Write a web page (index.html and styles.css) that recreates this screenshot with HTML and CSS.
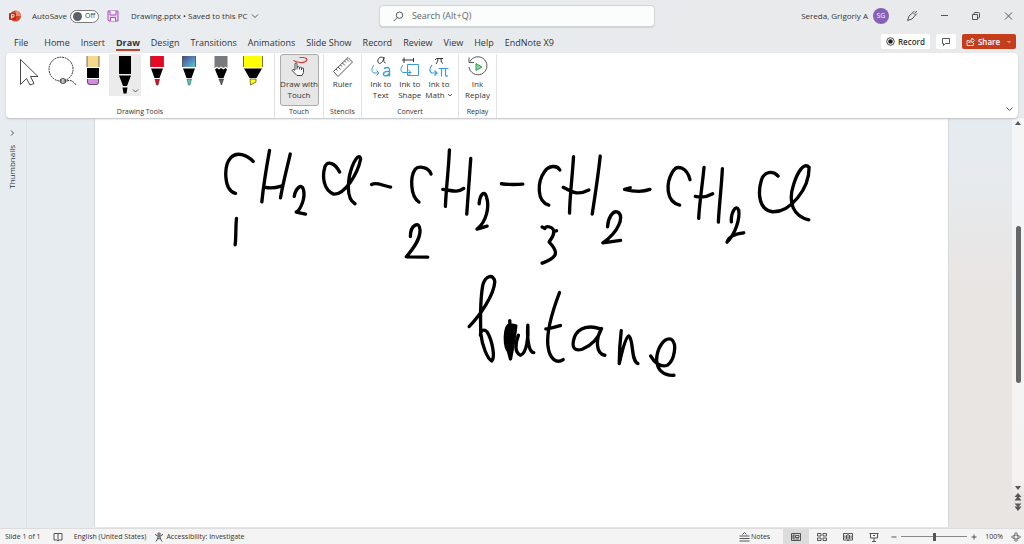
FILE: index.html
```
<!DOCTYPE html>
<html lang="en">
<head>
<meta charset="utf-8">
<title>Drawing.pptx - PowerPoint</title>
<link rel="stylesheet" href="styles.css">
</head>
<body>
<header class="titlebar">
  <div class="title-left">
    <svg class="logo" width="12" height="12" viewBox="0 0 12 12"><circle cx="6.500" cy="6" r="5.500" fill="#d9472b"/><path d="M6.500 .5a5.500 5.500 0 0 1 5.500 5.500H6.500z" fill="#f08a6c"/><rect y="3" width="7" height="7" rx="1" fill="#b92b12"/><path d="M2.500 8.500V4.500h1.500a1.200 1.200 0 0 1 0 2.500H2.500" fill="none" stroke="#fff"/></svg>
    <label class="autosave"><span>AutoSave</span><span class="switch"><input type="checkbox" role="switch"><span class="off">Off</span></span></label>
    <button class="plain save" aria-label="Save"><svg width="12" height="12" viewBox="0 0 12 12" fill="#ecd3f3" stroke="#a94fc0"><path d="M1 1h10v10H2L1 10z"/><path d="M3 1v4h6V1M3.500 11V7.500h5V11" fill="#f8f0fa"/></svg></button>
    <button class="plain doc">Drawing.pptx • Saved to this PC <svg width="8" height="8" viewBox="0 0 8 8"><path class="ln" d="M1 2.500l3 3 3-3"/></svg></button>
  </div>
  <div class="search">
    <svg width="11" height="11" viewBox="0 0 11 11"><circle class="ln" cx="6.500" cy="4.200" r="3.200"/><path class="ln" d="M4.200 6.500L.8 10"/></svg>
    <input type="text" aria-label="Search" placeholder="Search (Alt+Q)">
  </div>
  <div class="title-right">
    <button class="plain user">Sereda, Grigoriy A <span class="avatar">SG</span></button>
    <button class="plain win" aria-label="Ink"><svg width="12" height="12" viewBox="0 0 12 12"><path class="ln" d="M1.500 10.500L3 6l4-3.500 2.500 2.500L6 9l-4.500 1.500zM7 2.500L8.500 1M9.500 5L11 3.500M9 3l2-2"/></svg></button>
    <button class="plain win" aria-label="Minimize"><svg width="12" height="12" viewBox="0 0 12 12"><path class="ln" d="M3 5.500h7"/></svg></button>
    <button class="plain win" aria-label="Restore"><svg width="12" height="12" viewBox="0 0 12 12"><path class="ln" d="M2.500 4.500h5v5h-5zM4 4.500V3.500Q4 2.500 5 2.500h3.500q1 0 1 1V7q0 1-1 1h-1"/></svg></button>
    <button class="plain win" aria-label="Close"><svg width="12" height="12" viewBox="0 0 12 12"><path class="ln" d="M3 2.500l7 7M10 2.500l-7 7"/></svg></button>
  </div>
</header>

<div class="tabrow">
  <nav class="tabs">
    <a href="#" class="file">File</a><a href="#">Home</a><a href="#">Insert</a><a href="#" class="current">Draw</a><a href="#">Design</a><a href="#">Transitions</a><a href="#">Animations</a><a href="#">Slide Show</a><a href="#">Record</a><a href="#">Review</a><a href="#">View</a><a href="#">Help</a><a href="#">EndNote X9</a>
  </nav>
  <div class="actions">
    <button class="action record"><svg width="9" height="9" viewBox="0 0 9 9"><circle cx="4.500" cy="4.500" r="3.800" fill="none" stroke="#222" stroke-width=".8"/><circle cx="4.500" cy="4.500" r="2.300" fill="#222"/></svg>Record</button>
    <button class="action comment" aria-label="Comments"><svg width="10" height="10" viewBox="0 0 10 10"><path class="ln" d="M1.500 1.500h7v5H4.500L2.500 8.500v-2h-1z"/></svg></button>
    <button class="action share"><svg width="9" height="9" viewBox="0 0 9 9" fill="none" stroke="#fff" stroke-width=".8"><path d="M3 3.500H1v5h6.500V6M3 6c0-2 1-3 3-3V1l2.500 2.500L6 6V4.500C5 4.500 4 5 3 6z"/></svg>Share<svg class="chev" width="6" height="6" viewBox="0 0 6 6" fill="none" stroke="#fff" stroke-width=".8"><path d="M1.500 2l1.500 1.500L4.500 2"/></svg></button>
  </div>
</div>

<section class="ribbon">
  <div class="group g-tools">
    <div class="row tools">
      <button class="tool" aria-label="Select"><svg width="32" height="42" viewBox="0 0 32 42"><path d="M7.500 5.500v25l6-6 3.500 6.500 4-1.500-3.500-7h7.500z" fill="none" stroke="#333" stroke-width=".9"/></svg></button>
      <button class="tool" aria-label="Lasso select"><svg width="32" height="42" viewBox="0 0 32 42" fill="none" stroke="#222"><path d="M14 27A12 12 0 1 1 20 26.500" stroke-dasharray="1.800 .8"/><ellipse cx="18" cy="27" rx="3" ry="2.300"/><path d="M15.500 27h5M22 27q5-2 9 4" stroke-dasharray="2 .8"/></svg></button>
      <button class="tool" aria-label="Eraser"><svg width="32" height="42" viewBox="0 0 32 42"><path d="M10 2h12v11H10z" fill="#f5d98c"/><path d="M10 14h12v10H10z" fill="#000"/><path d="M10 25h12v3q0 3-3 3h-6q-3 0-3-3z" fill="#d58be0"/><path d="M10 2v11M22 2v11M10.500 25v3q0 2.500 2.500 2.500h6q2.500 0 2.500-2.500v-3" fill="none" stroke="#333" stroke-width=".7"/></svg></button>
      <button class="tool selected" aria-label="Black pen"><svg width="32" height="42" viewBox="0 0 32 42"><path d="M10 2h12v18H10zM10 21.500h12L18 32h-4zM13.500 33.500h5l-1 6h-3z"/><path class="ln" d="M24 35.500l2.500 2.500 2.500-2.500"/></svg></button>
      <button class="tool" aria-label="Red pen"><svg width="32" height="42" viewBox="0 0 32 42"><path d="M9.500 2h13v11h-13zM14 25h4.500L17 31h-1.500z" fill="#e50b25"/><path d="M10 14.500h12L18.500 24h-5z"/><path d="M9.500 2v11M22.500 2v11M14 25l1.500 6H17l1.500-6" fill="none" stroke="#422" stroke-width=".6"/></svg></button>
      <button class="tool" aria-label="Galaxy pen"><svg width="32" height="42" viewBox="0 0 32 42"><defs><linearGradient id="galaxy" x2="1" y2="1"><stop stop-color="#424878"/><stop offset=".5" stop-color="#5285ba"/><stop offset="1" stop-color="#65c9c5"/></linearGradient></defs><path d="M9.500 2h13v11h-13z" fill="url(#galaxy)"/><path d="M10 14.500h12L18.500 24h-5z"/><path d="M14 25h4.500L17 31h-1.500z" fill="#5bc5a9" stroke="#245" stroke-width=".5"/><path d="M9.500 2v11M22.500 2v11" stroke="#333" stroke-width=".7"/></svg></button>
      <button class="tool" aria-label="Pencil"><svg width="32" height="42" viewBox="0 0 32 42"><path d="M9.500 2h13v12l-2-1.500-2 1.500-2.500-1.500-2 1.500-2-1.500-2.500 1.500z" fill="#777b7d"/><path d="M10 15.500l2-1.500 2 1.500 2-1.500 2.500 1.500 2-1.500 1.500 1.500L18.500 24h-5z"/><path d="M14 25h4.500l-2 6z" fill="#666" stroke="#222" stroke-width=".6"/></svg></button>
      <button class="tool" aria-label="Highlighter"><svg width="32" height="42" viewBox="0 0 32 42"><path d="M6.500 2h19v11h-19z" fill="#ff0"/><path d="M7 14.500h18L19.500 24h-7z"/><path d="M13 25h6v3l-5.500 3z" fill="#ff0" stroke="#442" stroke-width=".7"/><path d="M6.500 2v11M25.500 2v11" stroke="#333" stroke-width=".7"/></svg></button>
    </div>
    <h2>Drawing Tools</h2>
  </div>
  <div class="group g-touch">
    <button class="cmd pressed"><svg width="20" height="22" viewBox="0 0 20 22"><path d="M10.500 1.500H14Q19 2 17.500 4.500T11 6.500Q7 6 4.500 4.500" fill="none" stroke="#d83b3b" stroke-width="1.200"/><path d="M6 14V7.500q1.200-1.500 2 0V11l1.300-.3 1.200.7 1.300-.2 1 .8 1.700.3V16.500l-1.500 3H8L3 14.500q.5-1.700 3-.3zM8 11v2.500M10.500 11.500v2M12.500 12v2" fill="#fff" stroke="#333" stroke-width=".9"/></svg><span>Draw with<br>Touch</span></button>
    <h2>Touch</h2>
  </div>
  <div class="group g-stencils">
    <button class="cmd"><svg width="22" height="22" viewBox="0 0 22 22"><path class="ln" d="M1.500 15.500L16 1.500l4.500 4.500L6 20.500zM4 13l1.500 1.500M6 11l2.500 2.500M8.500 9l1.500 1.500M10.500 7L13 9.500M12.500 5l1.500 1.500M14.500 3L17 5.500"/></svg><span>Ruler</span></button>
    <h2>Stencils</h2>
  </div>
  <div class="group g-convert">
    <div class="row">
      <button class="cmd"><svg width="22" height="22" viewBox="0 0 22 22" fill="none"><path d="M14 2C10-.5 7 3 8 6s5 1 6-4.500q-1 5 1.500 5.500" stroke="#333"/><path d="M4 9q-4 5-.5 8H9M6.500 14.500L9 17l-2.500 2.500" stroke="#3d9bd8"/><path d="M14 12.500q5.500-2.500 5.500 1.500v6.500M19.500 15.500c-4.500-.5-6.500 1-6 3s5 2 6-1.500" stroke="#3d9bd8" stroke-width="1.400"/></svg><span>Ink to<br>Text</span></button>
      <button class="cmd"><svg width="22" height="22" viewBox="0 0 22 22" fill="none"><path d="M3 4h12M5 1.500V7M14.500 2v4" stroke="#333"/><path d="M8.500 8.500h11v11h-11zM4 9q-4 4.500-.5 7.500H12M9 13.500l3 3-3 3" stroke="#3d9bd8"/></svg><span>Ink to<br>Shape</span></button>
      <button class="cmd math"><svg width="22" height="22" viewBox="0 0 22 22" fill="none"><path d="M7 4q1-2 3-1.500h5M10 2.500Q10 6 8 8M13 2.500Q12.500 7 15 7.500" stroke="#333"/><path d="M4 9q-4 5-.5 8H9M6.500 14.500L9 17l-2.500 2.500M10.500 12.500h10M13.500 12.500v8M17.500 12.500V19q.5 1.500 2.500 1" stroke="#3d9bd8" stroke-width="1.200"/></svg><span>Ink to<br>Math <svg class="mini" width="6" height="6" viewBox="0 0 6 6"><path class="ln" d="M1 2l2 2 2-2"/></svg></span></button>
    </div>
    <h2>Convert</h2>
  </div>
  <div class="group g-replay">
    <button class="cmd"><svg width="22" height="22" viewBox="0 0 22 22"><path class="ln" d="M3 5.500A9 9 0 1 1 2 11M2 1.500v5h5"/><path d="M9 7.500v7l6-3.500z" fill="#8cd59d" stroke="#2f9d4e"/></svg><span>Ink<br>Replay</span></button>
    <h2>Replay</h2>
  </div>
  <button class="plain collapse" aria-label="Collapse ribbon"><svg width="9" height="8" viewBox="0 0 9 8"><path class="ln" d="M1.500 2.500l3 3 3-3"/></svg></button>
</section>

<main class="work">
  <aside class="thumbs">
    <button class="plain" aria-label="Expand thumbnails"><svg width="8" height="8" viewBox="0 0 8 8"><path class="ln" d="M3 1.500L5.500 4 3 6.500"/></svg></button>
    <span class="vertical">Thumbnails</span>
  </aside>
  <div class="stage">
    <div class="slide">
      <svg class="ink" viewBox="95 118 852 409" preserveAspectRatio="xMinYMin meet" role="img" aria-label="Handwritten formula of 1,4-dichlorobutane">
        <g transform="translate(210 135) scale(.3333)">
          <path d="M129 79C110 60 80 48 62 68C40 92 40 165 76 175M178 46C170 90 160 150 155 200M240 57C230 100 217 150 211 188M163 156Q185 162 213 153"/>
          <path d="M252 184C256 160 275 142 280 165C286 190 270 225 258 231L286 237"/>
          <path d="M388 111C375 85 352 75 344 95C335 125 340 165 370 177C402 180 442 118 451 72C448 52 428 75 417 125C410 170 415 195 434 206M484 148C500 140 515 152 541 156M79 250C76 280 78 305 75 329"/>
        </g>
        <g transform="translate(400 135) scale(.3333)">
          <path d="M92 117C85 95 55 92 45 102C28 125 30 185 56 201M147 45C145 100 137 160 135 214M211 70C207 130 202 190 199 237M127 163C150 165 170 175 190 160"/>
          <path d="M236 206C238 180 252 163 258 185C268 215 258 260 230 282L260 273M303 146Q335 150 367 147"/>
          <path d="M478 105C470 90 445 90 432 110C410 140 408 200 445 210M519 65C515 130 508 180 507 234M599 63C592 130 582 190 575 237M488 157C510 165 525 185 565 165"/>
          <path d="M621 275C622 250 637 222 653 232C670 245 655 290 607 323L660 316M30 304C30 270 58 255 59 285C60 315 35 345 18 365L82 366"/>
          <path d="M425 276L433 280C435 270 460 275 460 290C460 305 448 315 446 321C460 335 470 350 462 362C452 375 435 380 425 384M468 287h.1"/>
        </g>
        <g transform="translate(610 135) scale(.3333)">
          <path d="M59 158L42 163C70 170 95 172 118 163M238 134C230 100 200 85 186 110C165 145 165 200 207 210M280 97C275 150 266 205 264 250M335 101C332 160 325 215 323 261M254 184C270 188 290 185 306 176"/>
          <path d="M362 260C360 235 375 205 384 225C388 250 375 295 349 321C355 300 380 295 399 293"/>
          <path d="M502 123C485 105 460 110 452 135C440 175 445 225 485 230C540 232 595 160 595 97C580 80 560 110 548 150C530 205 550 245 594 254"/>
        </g>
        <g transform="translate(450 265) scale(.3333)">
          <path d="M56 184C90 150 130 90 133 50C130 25 105 30 97 60C88 110 90 160 91 205C95 240 110 280 124 287C135 275 125 225 110 200C100 190 90 195 90 210"/>
          <path class="blot" d="M178 166V178C162 182 160 240 174 258L180 281C184 260 192 220 196 182L178 178z"/>
          <path d="M204 210C194 235 192 262 210 270C228 265 235 215 232 180C229 220 235 262 250 262M327 82C305 140 288 200 292 240C297 285 320 295 338 283M286 191C300 190 315 185 330 181"/>
          <path d="M447 190C420 180 385 185 372 215C360 250 375 258 395 252C425 240 445 215 453 190C435 220 435 265 463 270M512 196C508 230 506 260 506 295C515 255 525 215 535 212C550 225 540 285 562 295"/>
          <path d="M600 272C610 290 630 308 650 300C672 285 680 235 662 222C640 215 618 250 618 285C620 315 640 332 670 330"/>
        </g>
      </svg>
    </div>
  </div>
  <div class="scroll">
    <svg width="8" height="8" viewBox="0 0 8 8"><path d="M1 6l3-4 3 4z"/></svg>
    <div class="track"><div class="thumb"></div></div>
    <svg width="8" height="32" viewBox="0 0 8 32"><path d="M1 2h6L4 6zM4 9L.5 13H7.500zM4 12l-3.500 4.500h7zM4 23L.5 19.500h7zM4 27L.5 22.500h7z"/></svg>
  </div>
</main>

<footer class="status">
  <span>Slide 1 of 1</span>
  <button class="plain spell" aria-label="Spelling"><svg width="10" height="10" viewBox="0 0 10 10"><path class="ln" d="M5 1.500v7M1 1.500h8v6.500H6.500L5 9 3.500 8H1z"/></svg></button>
  <button class="plain lang">English (United States)</button>
  <button class="plain access"><svg width="10" height="10" viewBox="0 0 10 10"><path class="ln" d="M1 2.500l3 1.500v2L2 9.500M9 2.500L6 4v2l2 3.500M4 4h2M3 6l2 1 2-1"/><circle class="ln" cx="5" cy="2" r="1.200"/></svg>Accessibility: Investigate</button>
  <div class="status-right">
    <button class="plain notes"><svg width="11" height="11" viewBox="0 0 11 11"><path class="ln" d="M3.500 3.500l2-2 2 2M.5 5h10M.5 7.500h10M.5 10h10"/></svg>Notes</button>
    <button class="plain view on" aria-label="Normal"><svg width="10" height="10" viewBox="0 0 10 10"><path class="ln" d="M.5 1.500h9v7h-9zM3 1.500v7M4.500 3.500H8v2H4.500zM4.500 7H8M.5 4H3M.5 6H3"/></svg></button>
    <button class="plain view" aria-label="Slide sorter"><svg width="10" height="10" viewBox="0 0 10 10"><path class="ln" d="M.5 1.500H4v2.500H.5zM6 1.500h3.500v2.500H6zM.5 6H4v2.500H.5zM6 6h3.500v2.500H6z"/></svg></button>
    <button class="plain view" aria-label="Reading view"><svg width="10" height="10" viewBox="0 0 10 10"><path class="ln" d="M.5 1.500h3.500l1 .5 1-.5h3.500v6.500H6l-1 1-1-1H.5zM5 2v6.500M2 3.500v3M3.500 3v4M6.500 3v4M8 3.500v3"/></svg></button>
    <button class="plain view" aria-label="Slide show"><svg width="10" height="10" viewBox="0 0 10 10"><path class="ln" d="M.5 1.500h9M1.500 1.500V6h7V1.500M5 6v3M3 9.500h4M4 3.500h2"/></svg></button>
    <button class="plain step" aria-label="Zoom out"><svg width="6" height="6" viewBox="0 0 6 6"><path class="ln" d="M.5 3h5"/></svg></button>
    <input class="zoom" type="range" min="0" max="100" value="50" aria-label="Zoom">
    <button class="plain step" aria-label="Zoom in"><svg width="6" height="6" viewBox="0 0 6 6"><path class="ln" d="M.5 3h5M3 .5v5"/></svg></button>
    <button class="plain pct">100%</button>
    <button class="plain" aria-label="Fit to window"><svg width="10" height="10" viewBox="0 0 10 10"><path class="ln" d="M3 3h4v4H3zM3.500 2L5 .5 6.500 2M3.500 8L5 9.500 6.500 8M2 3.500L.5 5 2 6.500M8 3.500L9.500 5 8 6.500"/></svg></button>
  </div>
</footer>
</body>
</html>
```
FILE: styles.css
```
* { box-sizing: border-box; }
body {
  margin: 0;
  height: 100vh;
  display: flex;
  flex-direction: column;
  overflow: hidden;
  background: linear-gradient(100deg, #e9edf1, #e8ebed 50%, #e8eaec);
  color: #333;
  font: 8px/10px "Open Sans", "Noto Sans", sans-serif;
}
svg { flex: none; display: block; }
.ln { fill: none; stroke: #444; stroke-width: 0.9; }
button { font: inherit; color: inherit; border: 0; padding: 0; cursor: pointer; }
.plain { background: none; display: flex; align-items: center; gap: 3px; }

.titlebar { display: grid; grid-template-columns: 37fr 27fr 36fr; height: 32px; align-items: center; flex: none; }
.title-left { display: flex; align-items: center; padding-left: 9px; }
.autosave { display: flex; align-items: center; gap: 3px; margin-left: 11px; }
.switch { display: flex; align-items: center; gap: 3px; width: 29px; height: 13px; border: 1px solid #777; border-radius: 7px; padding-left: 2px; background: #fff; font-size: 7px; }
.switch input { appearance: none; width: 9px; height: 9px; margin: 0; border-radius: 50%; background: #5d6066; }
.save { margin: 0 12px 0 8px; }
.search { display: flex; align-items: center; gap: 8px; height: 22px; padding-left: 13px; background: #fbfcfc; border: 1px solid #d3d6d9; border-radius: 4px; box-shadow: 0 1px 1px #d0d3d6; }
.search input { flex: 1; min-width: 0; border: 0; background: none; font: 9px/12px "Open Sans", sans-serif; padding: 0; outline: 0; }
.search input::placeholder { color: #666; }
.title-right { display: flex; justify-content: flex-end; align-items: center; }
.user { gap: 5px; margin-right: 7px; }
.win { width: 32px; justify-content: center; }
.avatar { width: 16px; height: 16px; line-height: 16px; border-radius: 50%; background: #8661b5; color: #fff; font-size: 7px; text-align: center; }

.tabrow { display: flex; justify-content: space-between; height: 21px; flex: none; padding: 0 8px 0 14px; }
.tabs { display: flex; gap: 11px; font-size: 9px; line-height: 12px; padding-top: 5px; }
.tabs a { color: inherit; text-decoration: none; height: 14px; white-space: nowrap; }
.tabs .file { margin-right: 5px; }
.tabs .current { font-weight: 700; border-bottom: 2px solid #b7472a; }
.actions { display: flex; gap: 6px; padding-top: 2px; }
.action { display: flex; align-items: center; justify-content: center; gap: 3px; height: 15px; background: #fff; border-radius: 2px; font-weight: 600; }
.record { width: 49px; }
.comment { width: 20px; }
.share { width: 54px; background: #c43e1c; color: #fff; }
.chev { margin-left: 3px; }

.ribbon { display: flex; height: 65px; flex: none; margin: 0 6px; background: #fff; border-radius: 4px; box-shadow: 0 1px 2px #b9bdc1; z-index: 1; }
.group { display: flex; flex-direction: column; justify-content: space-between; align-items: center; border-right: 1px solid #e3e3e3; margin: 1px 0 0; }
.group h2 { margin: 0 0 1px; font: 7px/10px "Open Sans", sans-serif; }
.row { display: flex; }
.tools { padding-left: 2px; }
.g-tools { width: 269px; }
.g-touch { width: 49px; }
.g-stencils { width: 38px; }
.g-convert { width: 97px; }
.g-replay { width: 38px; }
.tool { width: 32px; height: 42px; background: none; }
.tool.selected { background: #ebebeb; }
.cmd { display: flex; flex-direction: column; align-items: center; background: none; line-height: 11px; min-width: 29px; padding-top: 1px; border: 1px solid transparent; border-radius: 3px; height: 52px; white-space: nowrap; }
.cmd .mini { display: inline-block; }
.pressed { width: 39px; background: #e6e6e6; border-color: #aaa; }
.collapse { margin: auto 4px 5px auto; }

.work { flex: 1; min-height: 0; display: flex; background: linear-gradient(115deg, #e7ecf1 40%, #e9e5e3 80%); }
.thumbs { width: 27px; display: flex; flex-direction: column; align-items: center; gap: 8px; padding: 11px 3px 0 0; border-right: 1px solid #dfe3e8; }
.vertical { writing-mode: vertical-rl; transform: rotate(180deg); }
.stage { flex: 1; min-width: 0; padding: 0 63px 1px 67px; background: linear-gradient(#e7ecf1, #e7ecf1) left / 70px 100% no-repeat, linear-gradient(#e6ebef 12%, #e9e5e3 40%); }
.slide { height: 100%; background: #fff; border: 1px solid #d5d9dc; border-width: 0 1px; }
.ink { width: 100%; fill: none; stroke: #000; stroke-width: 10; stroke-linecap: round; stroke-linejoin: round; }
.blot { fill: #000; }
.scroll { width: 12px; display: flex; flex-direction: column; align-items: center; padding: 1px 0 12px; background: linear-gradient(#f3f5f8, #f4f3f2 88%, #e9e5e3 92%); fill: #555; }
.track { flex: 1; width: 5px; padding-top: 99px; }
.thumb { height: 61%; border-radius: 3px; background: #666; }

.status { display: flex; align-items: center; height: 16px; flex: none; padding: 0 3px 0 5px; background: #f4f4f4; border-top: 1px solid #ddd; font-size: 7px; white-space: nowrap; }
.spell { margin: 0 11px 0 12px; }
.lang { margin-right: 8px; }
.access { gap: 2px; }
.status-right { margin-left: auto; display: flex; align-items: center; height: 100%; }
.notes { gap: 1px; margin-right: 13px; }
.view { width: 26px; height: 100%; justify-content: center; }
.view.on { background: #dcdcdc; }
.step { margin: 0 4px; }
.zoom { appearance: none; width: 66px; height: 9px; margin: 0; background: linear-gradient(#888, #888) center / 100% 1px no-repeat; }
.zoom::-webkit-slider-thumb { appearance: none; width: 3px; height: 8px; background: #555; }
.pct { margin: 0 8px 0 4px; }
```
